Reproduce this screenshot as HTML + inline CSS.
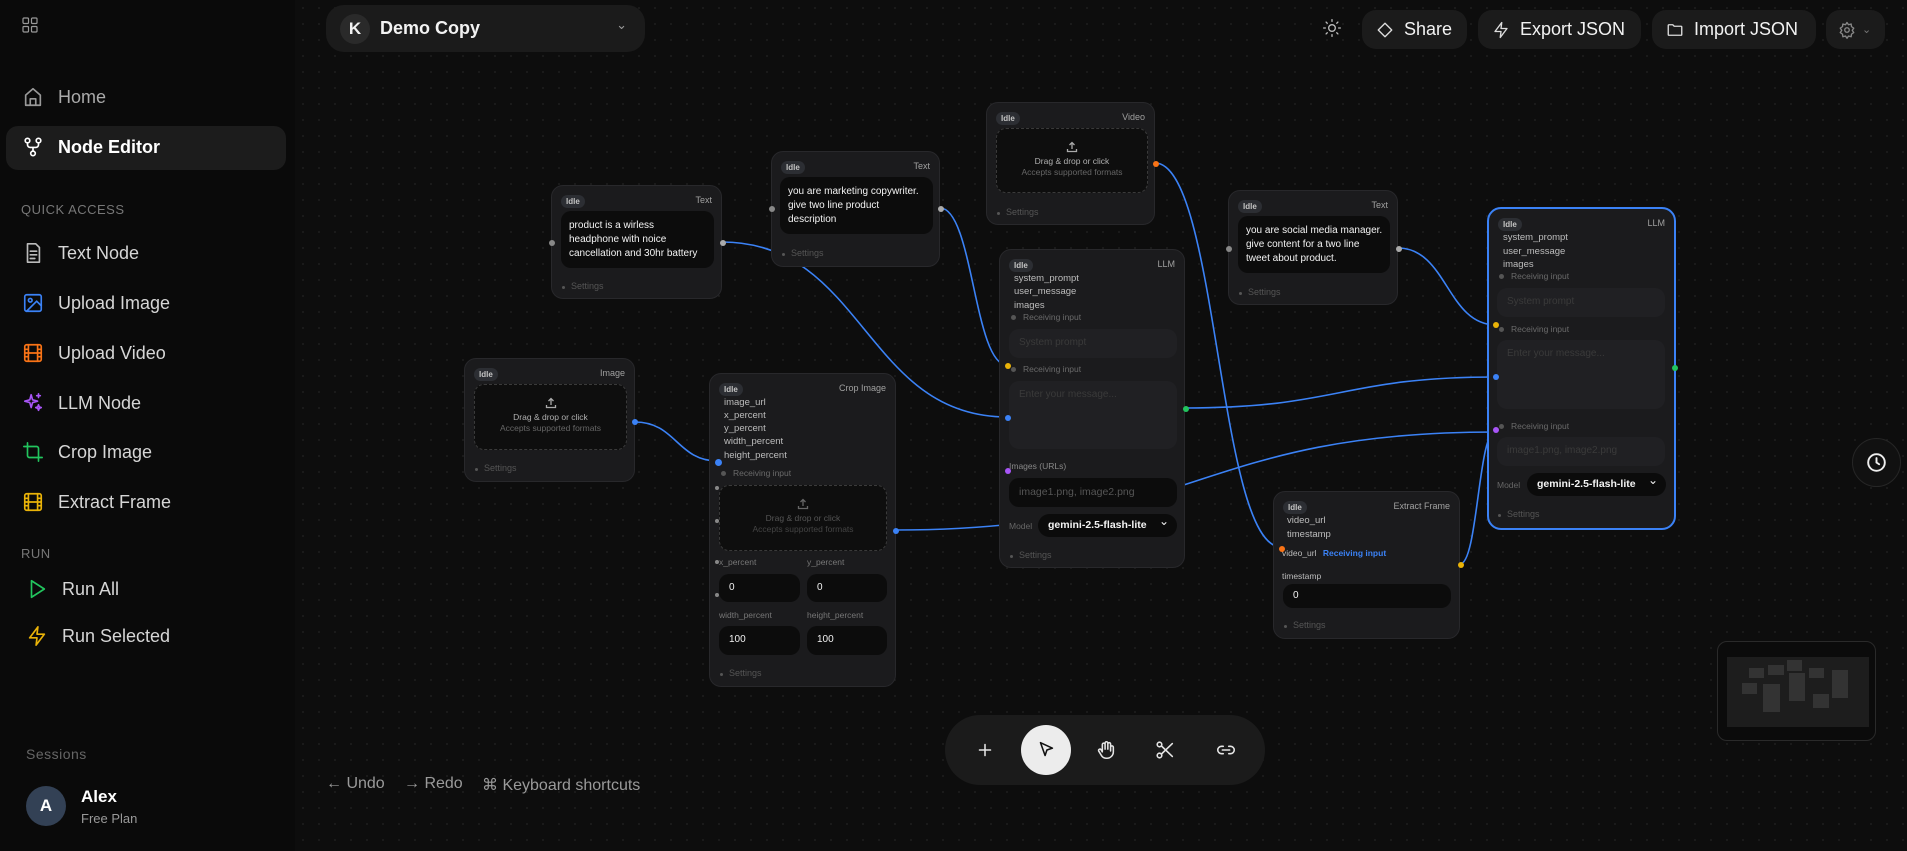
<!DOCTYPE html>
<html><head><meta charset="utf-8"><style>
*{box-sizing:border-box;margin:0;padding:0}
body{width:1907px;height:851px;overflow:hidden;background:#0d0d0d;font-family:"Liberation Sans",sans-serif;position:relative;color:#ddd}
.canvas{position:absolute;left:295px;top:0;right:0;bottom:0;background-color:#0d0d0d;background-image:radial-gradient(circle,#1e1e1e 0.8px,transparent 1px);background-size:16px 16px}
.side{position:absolute;left:0;top:0;width:295px;height:851px;background:#0a0a0a}
.si{position:absolute;left:22px;display:flex;align-items:center;gap:14px;font-size:18px;color:#d6d6d6}
.si svg{width:22px;height:22px;fill:none;stroke-width:1.8;stroke-linecap:round;stroke-linejoin:round}
.sec{position:absolute;left:21px;font-size:13px;color:#777;letter-spacing:.5px}
.pill{position:absolute;top:10px;height:39px;border-radius:14px;background:#1b1b1b;display:flex;align-items:center;gap:10px;padding:0 14px;font-size:18px;color:#f2f2f2}
.pill svg{width:18px;height:18px;fill:none;stroke:#ddd;stroke-width:1.8;stroke-linecap:round;stroke-linejoin:round}
.node{position:absolute;background:#1b1b1d;border:1px solid #28282b;border-radius:12px}
.node>*{position:absolute}
.idle{left:9px;top:9px;font-size:8px;font-weight:bold;color:#c4c4c4;background:#2c2e33;padding:2px 5px;border-radius:7px;line-height:9px}
.ttl{right:9px;top:9px;font-size:9px;color:#a0a0a0}
.lb{font-size:9.5px;color:#bdbdbd;line-height:12px}
.rc{font-size:8.5px;color:#6a6a6a;line-height:12px;padding-left:14px}
.rc:before{content:"";position:absolute;left:2px;top:4px;width:5px;height:5px;border-radius:50%;background:#555}
.set{font-size:9px;color:#555;padding-left:10px;left:9px}
.set:before{content:"";position:absolute;left:1px;top:5px;width:3px;height:3px;border-radius:50%;background:#555}
.tb{background:#0c0c0c;border-radius:10px;padding:8px 6px 8px 8px;font-size:10px;line-height:14px;color:#f4f4f4;white-space:nowrap;overflow:hidden}
.box{background:#202023;border-radius:10px;font-size:10px;color:#3a3a3a;padding:8px 10px}
.dz{border:1px dashed #3a3a3a;border-radius:10px;background:#0e0e0e;text-align:center;font-size:8.5px;color:#b0b0b0;padding-top:12px;line-height:11px}
.dz small{display:block;color:#666;font-size:8.5px}
.dz svg{width:12px;height:12px;fill:none;stroke:#aaa;stroke-width:1.3;display:block;margin:0 auto 3px}
.inp{background:#0c0c0c;border-radius:10px;font-size:10px;color:#f2f2f2;padding:8px 10px;line-height:12px}
.sel{background:#0b0b0b;border-radius:12px;font-size:10.5px;font-weight:bold;color:#f4f4f4;padding:5px 10px;line-height:13px}
.sel:after{content:"⌄";position:absolute;right:8px;top:1px;font-size:12px;font-weight:normal}
.h{width:6px;height:6px;border-radius:50%;background:#888;margin:-3px 0 0 -3px}
.tool{position:absolute;top:750px;width:22px;height:22px;margin:-11px 0 0 -11px;fill:none;stroke:#e5e5e5;stroke-width:1.7;stroke-linecap:round;stroke-linejoin:round}
.ur{position:absolute;top:775px;font-size:16px;color:#9a9a9a}
</style></head><body>
<div class="canvas"></div>
<div class="side">
<svg style="position:absolute;left:22px;top:17px;width:16px;height:16px" viewBox="0 0 16 16" fill="none" stroke="#999" stroke-width="1.2"><rect x="1" y="1" width="5.5" height="5.5" rx="1"/><rect x="9.5" y="1" width="5.5" height="5.5" rx="1"/><rect x="1" y="9.5" width="5.5" height="5.5" rx="1"/><rect x="9.5" y="9.5" width="5.5" height="5.5" rx="1"/></svg>
<div class="si" style="top:86px;color:#aaa"><svg viewBox="0 0 24 24" stroke="#999"><path d="M4 21V10l8-7 8 7v11zM9 21v-7h6v7"/></svg>Home</div>
<div style="position:absolute;left:6px;top:126px;width:280px;height:44px;border-radius:12px;background:#1c1c1c"></div>
<div class="si" style="top:136px;color:#fff;font-weight:bold"><svg viewBox="0 0 24 24" stroke="#fff"><circle cx="6" cy="5" r="2.5"/><circle cx="18" cy="5" r="2.5"/><circle cx="12" cy="19" r="2.5"/><path d="M6 7.5v2a3 3 0 003 3h6a3 3 0 003-3v-2M12 12.5v4"/></svg>Node Editor</div>
<div class="sec" style="top:202px">QUICK ACCESS</div>
<div class="si" style="top:242px"><svg viewBox="0 0 24 24" stroke="#bbb"><path d="M6 2h9l4 4v16H6zM9 10h7M9 14h7M9 18h5"/></svg>Text Node</div>
<div class="si" style="top:292px"><svg viewBox="0 0 24 24" stroke="#3b82f6"><rect x="3" y="3" width="18" height="18" rx="2"/><circle cx="9" cy="9" r="2"/><path d="M21 15l-5-5L5 21"/></svg>Upload Image</div>
<div class="si" style="top:342px"><svg viewBox="0 0 24 24" stroke="#f97316"><rect x="3" y="3" width="18" height="18" rx="2"/><path d="M7 3v18M17 3v18M3 8h4M3 16h4M17 8h4M17 16h4M3 12h18"/></svg>Upload Video</div>
<div class="si" style="top:392px"><svg viewBox="0 0 24 24" stroke="#a855f7"><path d="M10 3l1.5 5.5L17 10l-5.5 1.5L10 17l-1.5-5.5L3 10l5.5-1.5zM18 14l.8 2.2L21 17l-2.2.8L18 20l-.8-2.2L15 17l2.2-.8zM18 2v4M16 4h4"/></svg>LLM Node</div>
<div class="si" style="top:441px"><svg viewBox="0 0 24 24" stroke="#22c55e"><path d="M6 2v14a2 2 0 002 2h14M18 22V8a2 2 0 00-2-2H2"/></svg>Crop Image</div>
<div class="si" style="top:491px"><svg viewBox="0 0 24 24" stroke="#eab308"><rect x="3" y="3" width="18" height="18" rx="2"/><path d="M7 3v18M17 3v18M3 8h4M3 16h4M17 8h4M17 16h4M3 12h18"/></svg>Extract Frame</div>
<div class="sec" style="top:546px">RUN</div>
<div class="si" style="top:578px;left:26px"><svg viewBox="0 0 24 24" stroke="#22c55e"><path d="M6 3l14 9-14 9z"/></svg>Run All</div>
<div class="si" style="top:625px;left:26px"><svg viewBox="0 0 24 24" stroke="#eab308"><path d="M13 2L4 14h8l-1 8 9-12h-8z"/></svg>Run Selected</div>
<div class="sec" style="top:746px;left:26px;font-size:14px;color:#666">Sessions</div>
<div style="position:absolute;left:26px;top:786px;width:40px;height:40px;border-radius:50%;background:#334155;color:#fff;font-weight:bold;font-size:17px;display:flex;align-items:center;justify-content:center">A</div>
<div style="position:absolute;left:81px;top:787px;font-size:17px;font-weight:bold;color:#fff">Alex</div>
<div style="position:absolute;left:81px;top:811px;font-size:13px;color:#999">Free Plan</div>
</div>

<div class="pill" style="left:326px;top:5px;width:319px;height:47px;border-radius:18px;padding-left:14px">
<div style="width:30px;height:30px;border-radius:50%;background:#2a2a2a;display:flex;align-items:center;justify-content:center;font-weight:bold;font-size:17px">K</div>
<span style="font-weight:bold;font-size:18px">Demo Copy</span>
<span style="position:absolute;right:18px;top:12px;color:#999;font-size:13px">⌄</span></div>
<svg style="position:absolute;left:1322px;top:18px;width:20px;height:20px" viewBox="0 0 24 24" fill="none" stroke="#bbb" stroke-width="1.6" stroke-linecap="round"><circle cx="12" cy="12" r="4"/><path d="M12 2v2M12 20v2M2 12h2M20 12h2M4.9 4.9l1.4 1.4M17.7 17.7l1.4 1.4M4.9 19.1l1.4-1.4M17.7 6.3l1.4-1.4"/></svg>
<div class="pill" style="left:1362px;width:105px"><svg viewBox="0 0 24 24"><path d="M12 3l9 9-9 9-9-9z"/></svg>Share</div>
<div class="pill" style="left:1478px;width:163px"><svg viewBox="0 0 24 24"><path d="M13 2L4 14h8l-1 8 9-12h-8z"/></svg>Export JSON</div>
<div class="pill" style="left:1652px;width:164px"><svg viewBox="0 0 24 24"><path d="M3 6a1 1 0 011-1h5l2 2h9a1 1 0 011 1v10a1 1 0 01-1 1H4a1 1 0 01-1-1z"/></svg>Import JSON</div>
<div class="pill" style="left:1826px;width:59px;padding:0 12px;gap:6px"><svg viewBox="0 0 24 24" style="stroke:#888"><circle cx="12" cy="12" r="3"/><path d="M12 2l2 3 3.5-1 .5 3.5 3 2-2 3 2 3-3 2-.5 3.5-3.5-1-2 3-2-3-3.5 1-.5-3.5-3-2 2-3-2-3 3-2 .5-3.5 3.5 1z"/></svg><span style="color:#777;font-size:11px">⌄</span></div>

<svg style="position:absolute;left:0;top:0" width="1907" height="851" fill="none" stroke="#3b82f6" stroke-width="1.6">
<path d="M722 242C864 242 865 417 1007 417"/>
<path d="M940 208C973 208 974 365 1007 365"/>
<path d="M1155 163C1218 163 1218 547 1281 547"/>
<path d="M1398 248C1447 248 1447 325 1496 325"/>
<path d="M1185 408C1340 408 1341 377 1496 377"/>
<path d="M1460 564C1478 564 1478 430 1496 430"/>
<path d="M635 422C676 422 677 461 718 461"/>
<path d="M896 530C1196 530 1196 432 1496 432"/>
</svg>

<div class="node" style="left:551px;top:185px;width:171px;height:114px">
<div class="idle">Idle</div><div class="ttl">Text</div>
<div class="tb" style="left:9px;top:25px;width:153px;height:57px">product is a wirless<br>headphone with noice<br>cancellation and 30hr battery</div>
<div class="set" style="top:95px">Settings</div>
<div class="h" style="left:0;top:57px"></div><div class="h" style="left:171px;top:57px;background:#aaa"></div>
</div>
<div class="node" style="left:771px;top:151px;width:169px;height:116px">
<div class="idle">Idle</div><div class="ttl">Text</div>
<div class="tb" style="left:8px;top:25px;width:153px;height:57px">you are marketing copywriter.<br>give two line product<br>description</div>
<div class="set" style="top:96px">Settings</div>
<div class="h" style="left:0;top:57px"></div><div class="h" style="left:169px;top:57px;background:#aaa"></div>
</div>
<div class="node" style="left:986px;top:102px;width:169px;height:123px">
<div class="idle">Idle</div><div class="ttl">Video</div>
<div class="dz" style="left:9px;top:25px;width:152px;height:65px"><svg viewBox="0 0 12 12"><path d="M6 8V1.5M3.5 4L6 1.5 8.5 4M1.5 8v2.5h9V8"/></svg>Drag &amp; drop or click<small>Accepts supported formats</small></div>
<div class="set" style="top:104px">Settings</div>
<div class="h" style="left:169px;top:61px;background:#f97316"></div>
</div>
<div class="node" style="left:1228px;top:190px;width:170px;height:115px">
<div class="idle">Idle</div><div class="ttl">Text</div>
<div class="tb" style="left:9px;top:25px;width:152px;height:57px">you are social media manager.<br>give content for a two line<br>tweet about product.</div>
<div class="set" style="top:96px">Settings</div>
<div class="h" style="left:0;top:58px"></div><div class="h" style="left:170px;top:58px;background:#aaa"></div>
</div>
<div class="node" style="left:464px;top:358px;width:171px;height:124px">
<div class="idle">Idle</div><div class="ttl">Image</div>
<div class="dz" style="left:9px;top:25px;width:153px;height:66px"><svg viewBox="0 0 12 12"><path d="M6 8V1.5M3.5 4L6 1.5 8.5 4M1.5 8v2.5h9V8"/></svg>Drag &amp; drop or click<small>Accepts supported formats</small></div>
<div class="set" style="top:104px">Settings</div>
<div class="h" style="left:170px;top:63px;background:#3b82f6"></div>
</div>
<div class="node" style="left:709px;top:373px;width:187px;height:314px">
<div class="idle">Idle</div><div class="ttl">Crop Image</div>
<div class="lb" style="left:14px;top:23px">image_url</div>
<div class="lb" style="left:14px;top:36px">x_percent</div>
<div class="lb" style="left:14px;top:49px">y_percent</div>
<div class="lb" style="left:14px;top:62px">width_percent</div>
<div class="lb" style="left:14px;top:76px">height_percent</div>
<div class="rc" style="left:9px;top:93px">Receiving input</div>
<div class="dz" style="left:9px;top:111px;width:168px;height:66px;color:#555"><svg viewBox="0 0 12 12" style="stroke:#666"><path d="M6 8V1.5M3.5 4L6 1.5 8.5 4M1.5 8v2.5h9V8"/></svg>Drag &amp; drop or click<small style="color:#444">Accepts supported formats</small></div>
<div class="lb" style="left:9px;top:182px;font-size:8.5px;color:#777">x_percent</div>
<div class="lb" style="left:97px;top:182px;font-size:8.5px;color:#777">y_percent</div>
<div class="inp" style="left:9px;top:200px;width:81px;height:28px">0</div>
<div class="inp" style="left:97px;top:200px;width:80px;height:28px">0</div>
<div class="lb" style="left:9px;top:235px;font-size:8.5px;color:#777">width_percent</div>
<div class="lb" style="left:97px;top:235px;font-size:8.5px;color:#777">height_percent</div>
<div class="inp" style="left:9px;top:252px;width:81px;height:29px">100</div>
<div class="inp" style="left:97px;top:252px;width:80px;height:29px">100</div>
<div class="set" style="top:294px">Settings</div>
<div class="h" style="left:8px;top:88px;background:#3b82f6;width:7px;height:7px"></div>
<div class="h" style="left:8px;top:115px;width:4px;height:4px"></div><div class="h" style="left:8px;top:148px;width:4px;height:4px"></div>
<div class="h" style="left:8px;top:189px;width:4px;height:4px"></div><div class="h" style="left:8px;top:222px;width:4px;height:4px"></div>
<div class="h" style="left:186px;top:157px;background:#3b82f6"></div>
</div>
<div class="node" style="left:999px;top:249px;width:186px;height:319px">
<div class="idle">Idle</div><div class="ttl">LLM</div>
<div class="lb" style="left:14px;top:23px">system_prompt</div>
<div class="lb" style="left:14px;top:36px">user_message</div>
<div class="lb" style="left:14px;top:50px">images</div>
<div class="rc" style="left:9px;top:61px">Receiving input</div>
<div class="box" style="left:9px;top:79px;width:168px;height:29px">System prompt</div>
<div class="rc" style="left:9px;top:113px">Receiving input</div>
<div class="box" style="left:9px;top:131px;width:168px;height:68px">Enter your message...</div>
<div class="lb" style="left:9px;top:210px;font-size:8.5px;color:#888">Images (URLs)</div>
<div class="inp" style="left:9px;top:228px;width:168px;height:29px;color:#555;font-size:10.5px">image1.png, image2.png</div>
<div class="lb" style="left:9px;top:270px;font-size:8.5px;color:#666">Model</div>
<div class="sel" style="left:38px;top:264px;width:139px;height:23px">gemini-2.5-flash-lite</div>
<div class="set" style="top:300px">Settings</div>
<div class="h" style="left:8px;top:116px;background:#eab308"></div>
<div class="h" style="left:8px;top:168px;background:#3b82f6"></div>
<div class="h" style="left:8px;top:221px;background:#a855f7"></div>
<div class="h" style="left:186px;top:159px;background:#22c55e"></div>
</div>
<div class="node" style="left:1273px;top:491px;width:187px;height:148px">
<div class="idle">Idle</div><div class="ttl">Extract Frame</div>
<div class="lb" style="left:13px;top:23px">video_url</div>
<div class="lb" style="left:13px;top:37px">timestamp</div>
<div class="lb" style="left:8px;top:55px;font-size:8.5px">video_url <span style="color:#3b82f6;font-weight:bold;margin-left:4px">Receiving input</span></div>
<div class="lb" style="left:8px;top:78px;font-size:8.5px">timestamp</div>
<div class="inp" style="left:9px;top:92px;width:168px;height:24px;padding:6px 10px">0</div>
<div class="set" style="top:128px">Settings</div>
<div class="h" style="left:8px;top:57px;background:#f97316"></div>
<div class="h" style="left:187px;top:73px;background:#eab308"></div>
</div>
<div class="node" style="left:1487px;top:207px;width:189px;height:323px;border:2px solid #3b82f6;border-radius:14px">
<div class="idle">Idle</div><div class="ttl">LLM</div>
<div class="lb" style="left:14px;top:23px">system_prompt</div>
<div class="lb" style="left:14px;top:37px">user_message</div>
<div class="lb" style="left:14px;top:50px">images</div>
<div class="rc" style="left:8px;top:61px">Receiving input</div>
<div class="box" style="left:8px;top:79px;width:168px;height:29px">System prompt</div>
<div class="rc" style="left:8px;top:114px">Receiving input</div>
<div class="box" style="left:8px;top:131px;width:168px;height:69px">Enter your message...</div>
<div class="rc" style="left:8px;top:211px">Receiving input</div>
<div class="box" style="left:8px;top:228px;width:168px;height:29px">image1.png, image2.png</div>
<div class="lb" style="left:8px;top:270px;font-size:8.5px;color:#666">Model</div>
<div class="sel" style="left:38px;top:264px;width:139px;height:23px">gemini-2.5-flash-lite</div>
<div class="set" style="top:300px;left:8px">Settings</div>
<div class="h" style="left:7px;top:116px;background:#eab308"></div>
<div class="h" style="left:7px;top:168px;background:#3b82f6"></div>
<div class="h" style="left:7px;top:221px;background:#a855f7"></div>
<div class="h" style="left:186px;top:159px;background:#22c55e"></div>
</div>

<div style="position:absolute;left:1852px;top:438px;width:49px;height:49px;border-radius:50%;background:#111;border:1px solid #262626"></div>
<svg style="position:absolute;left:1866px;top:452px;width:21px;height:21px" viewBox="0 0 24 24" fill="none" stroke="#eee" stroke-width="2.2" stroke-linecap="round"><circle cx="12" cy="12" r="9.5"/><path d="M12 7v5l3 2"/></svg>

<div style="position:absolute;left:1717px;top:641px;width:159px;height:100px;border:1px solid #2a2a2a;border-radius:10px;background:#0b0b0b">
<div style="position:absolute;left:9px;top:15px;width:142px;height:70px;background:#1d1d1d">
<div style="position:absolute;left:22px;top:11px;width:15px;height:10px;background:#333"></div>
<div style="position:absolute;left:41px;top:8px;width:16px;height:10px;background:#333"></div>
<div style="position:absolute;left:60px;top:3px;width:15px;height:11px;background:#333"></div>
<div style="position:absolute;left:82px;top:11px;width:15px;height:10px;background:#333"></div>
<div style="position:absolute;left:15px;top:26px;width:15px;height:11px;background:#333"></div>
<div style="position:absolute;left:36px;top:27px;width:17px;height:28px;background:#333"></div>
<div style="position:absolute;left:62px;top:16px;width:16px;height:28px;background:#333"></div>
<div style="position:absolute;left:86px;top:37px;width:16px;height:14px;background:#333"></div>
<div style="position:absolute;left:105px;top:13px;width:16px;height:28px;background:#333"></div>
</div></div>

<div style="position:absolute;left:945px;top:715px;width:320px;height:70px;border-radius:35px;background:#1b1b1b"></div>
<div style="position:absolute;left:1021px;top:725px;width:50px;height:50px;border-radius:50%;background:#ececec"></div>
<svg class="tool" style="left:985px" viewBox="0 0 24 24"><path d="M12 6v12M6 12h12"/></svg>
<svg class="tool" style="left:1046px;stroke:#111" viewBox="0 0 24 24"><path d="M6 4l13 6-6 2-2 6z"/></svg>
<svg class="tool" style="left:1106px" viewBox="0 0 24 24"><path d="M8 13V6a1.5 1.5 0 013 0v5M11 11V4.5a1.5 1.5 0 013 0V11M14 11V5.5a1.5 1.5 0 013 0V13M17 9a1.5 1.5 0 013 0v5a7 7 0 01-7 7h-1a6 6 0 01-5-3l-3-5a1.5 1.5 0 012.5-1.5L8 14"/></svg>
<svg class="tool" style="left:1165px" viewBox="0 0 24 24"><circle cx="6" cy="6" r="2.5"/><circle cx="6" cy="18" r="2.5"/><path d="M8 7.5L20 19M8 16.5L20 5"/></svg>
<svg class="tool" style="left:1226px" viewBox="0 0 24 24"><path d="M9 8H7a4 4 0 000 8h2M15 8h2a4 4 0 010 8h-2M8 12h8"/></svg>

<div class="ur" style="left:326px">← Undo</div>
<div class="ur" style="left:404px">→ Redo</div>
<div class="ur" style="left:482px">⌘ Keyboard shortcuts</div>
</body></html>
